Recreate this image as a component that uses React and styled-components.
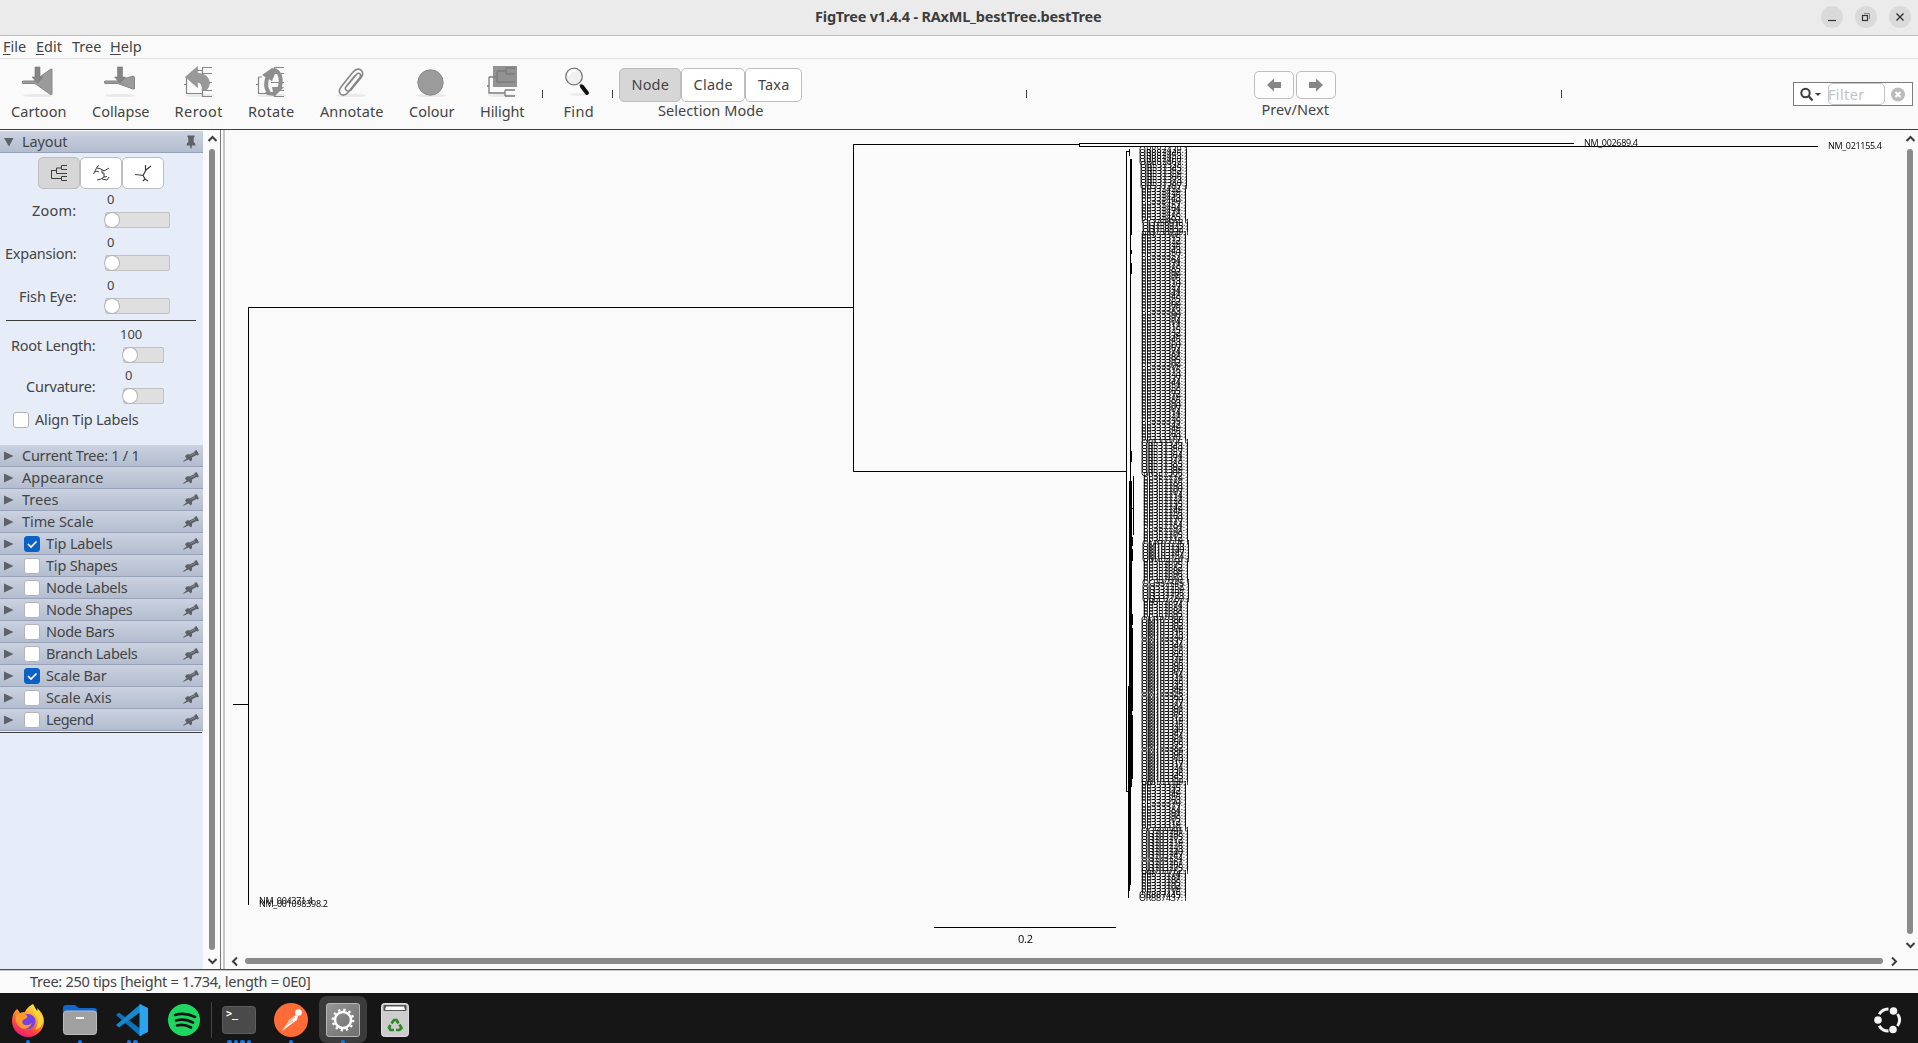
import React, { useLayoutEffect, useRef, useState } from "react";
import styled, { createGlobalStyle, css } from "styled-components";

const Global = createGlobalStyle`
  *, *::before, *::after { box-sizing: border-box; }
  html, body { margin: 0; padding: 0; overflow: hidden; background: #fafafa; }
  body { font-family: "Noto Sans", "Open Sans", sans-serif; font-size: 14.5px; line-height: 20px; color: #444; }
  svg { display: block; flex: none; }
`;

/* ---------- text that is tracked to an exact run length ---------- */
const Run = styled.span`
  display: block;
  flex: none;
  width: ${(p) => p.$w}px;
  white-space: nowrap;
`;
function Fit({ w, children, className }) {
  const ref = useRef(null);
  const [ls, setLs] = useState(0);
  useLayoutEffect(() => {
    const natural = ref.current.getBoundingClientRect().width;
    setLs((w + 0.5 - natural) / children.length);
  }, [w, children]);
  return (
    <Run $w={w} className={className} style={{ letterSpacing: ls }}>
      <span ref={ref}>{children}</span>
    </Run>
  );
}

const Window = styled.div`
  width: 1918px;
  height: 1043px;
  display: flex;
  flex-direction: column;
  overflow: hidden;
`;

/* ---------- title bar ---------- */
const TitleBar = styled.header`
  height: 36px;
  flex: none;
  background: #ebebeb;
  border-bottom: 1px solid #bcbcbc;
  display: flex;
  align-items: center;
  padding: 0 7px 1px 815px;
`;
const Title = styled(Fit)`
  font-weight: 700;
  font-size: 14.5px;
  color: #3d3d3d;
  margin-top: -2px;
`;
const WindowButtons = styled.div`
  display: flex;
  gap: 12px;
  margin-left: auto;
`;
const RoundButton = styled.div`
  width: 22px;
  height: 22px;
  border-radius: 50%;
  background: #dadada;
`;

/* ---------- menu ---------- */
const MenuBar = styled.nav`
  height: 23px;
  flex: none;
  border-bottom: 1px solid #e0e0e0;
  display: flex;
  align-items: center;
  gap: 9px;
  padding: 0 0 2px 3px;
  u { text-underline-offset: 2px; text-decoration-thickness: 1px; }
`;

/* ---------- toolbar ---------- */
const ToolBar = styled.div`
  height: 71px;
  flex: none;
  display: flex;
  border-bottom: 1px solid #3d3d3d;
`;
const Tool = styled.div`
  width: ${(p) => p.$w}px;
  flex: none;
  margin-left: ${(p) => p.$ml || 0}px;
  padding-top: 7px;
  display: flex;
  flex-direction: column;
  align-items: center;
`;
const ToolLabel = styled(Fit)`
  margin-top: 3px;
  line-height: 20px;
`;
const Tick = styled.div`
  flex: none;
  width: 1px;
  height: 8px;
  margin-top: 31px;
  margin-left: ${(p) => p.$ml}px;
  background: #3d3d3d;
`;
const Segments = styled.div`
  display: flex;
`;
const Segment = styled.div`
  width: ${(p) => p.$w}px;
  height: ${(p) => p.$h}px;
  display: flex;
  align-items: center;
  justify-content: center;
  border: 1px solid #bdbdbd;
  border-radius: 5px;
  background: ${(p) => (p.$on ? "#d6d6d6" : "#fff")};
  ${Run} { margin-top: -2px; }
`;
const ModeGroup = styled(Tool)`
  padding-top: 9px;
  ${ToolLabel} { margin-top: -2px; }
`;
const NavGroup = styled(Tool)`
  padding-top: 12px;
  ${Segments} { gap: 2px; }
  ${Segment} { background: #fdfdfd; }
`;
const FilterBox = styled.div`
  width: 120px;
  height: 24px;
  margin: 23px 0 0 231px;
  border: 1px solid #7d7d7d;
  background: #fff;
  display: flex;
  align-items: center;
`;
const FilterInput = styled.div`
  width: 57px;
  height: 22px;
  margin-left: 6px;
  border: 1px solid #c2c2c2;
  border-radius: 5px;
  color: #c3c3c3;
  display: flex;
  align-items: center;
  ${Run} { margin: -1px 0 0 -1px; }
`;

/* ---------- body ---------- */
const Body = styled.main`
  height: 840px;
  flex: none;
  display: flex;
  border-bottom: 1px solid #4a4a4a;
`;
const Sidebar = styled.aside`
  width: 203px;
  flex: none;
  margin-top: 1px;
  background: #e6edf8;
`;
const Section = styled.div`
  height: 22px;
  display: flex;
  align-items: center;
  padding: 0 4px 0 4px;
  background: linear-gradient(#cbd2e0, #b3bdcf);
  border-bottom: 1px solid #98a3ba;
`;
const SectionName = styled(Fit)`
  margin-top: -2px;
`;
const Disclosure = styled.div`
  width: 18px;
  flex: none;
`;
const PinSlot = styled.div`
  margin-left: auto;
`;
const Check = styled.div`
  width: 16px;
  height: 16px;
  flex: none;
  margin: 0 6px 0 ${(p) => p.$ml}px;
  border-radius: 3px;
  border: 1px solid ${(p) => (p.$on ? "#0b62c4" : "#b4b4b4")};
  background: ${(p) => (p.$on ? "#0b62c4" : "#fff")};
`;
const LayoutPane = styled.div`
  height: 292px;
  padding-top: 4px;
`;
const LayoutModes = styled(Segments)`
  padding-left: 38px;
  margin-bottom: 1px;
`;
const Control = styled.div`
  height: ${(p) => p.$h}px;
  display: flex;
`;
const ControlName = styled.div`
  width: ${(p) => p.$w}px;
  padding-top: ${(p) => 11 - p.$lift}px;
  display: flex;
  justify-content: flex-end;
`;
const Slider = styled.div`
  margin-left: ${(p) => p.$ml}px;
`;
const Value = styled.div`
  height: 23px;
  margin-top: ${(p) => -p.$lift}px;
  margin-left: ${(p) => p.$x}px;
  font-size: 13px;
`;
const Track = styled.div`
  width: ${(p) => p.$w}px;
  height: 16px;
  border: 1px solid #c2c2c2;
  border-radius: 2px;
  background: #dfdfdf;
`;
const Knob = styled.div`
  width: 14px;
  height: 14px;
  margin-left: -1px;
  border-radius: 50%;
  background: #fff;
  box-shadow: 0 0 0 1px #b5b5b5;
`;
const Rule = styled.div`
  height: 1px;
  margin: 0 7px 3px 6px;
  background: #3d3d3d;
`;
const AlignRow = styled.div`
  display: flex;
  align-items: center;
  margin-top: 1px;
  ${Run} { margin-top: -1px; }
`;
const EndRule = styled.div`
  height: 1px;
  width: 202px;
  margin-top: 1px;
  background: #3d3d3d;
`;
const VBar = styled.div`
  width: 17px;
  flex: none;
  display: flex;
  flex-direction: column;
  align-items: center;
  padding: 3px ${(p) => p.$pr || 0}px 0 ${(p) => p.$pl || 0}px;
`;
const VThumb = styled.div`
  width: 6px;
  height: ${(p) => p.$h}px;
  margin: 4px 0 5px;
  border-radius: 3px;
  background: #8a8a8a;
`;
const Divider = styled.div`
  width: 5px;
  flex: none;
  border-left: 1px solid #777;
  border-right: 2px solid #c6c6c6;
`;
const Viewer = styled.section`
  width: 1678px;
  flex: none;
`;
const HBar = styled.div`
  height: 14px;
  display: flex;
  align-items: center;
  padding-left: 4px;
`;
const HThumb = styled.div`
  width: 1638px;
  height: 6px;
  margin: 0 5px 0 3px;
  border-radius: 3px;
  background: #8a8a8a;
`;
const Status = styled.div`
  height: 23px;
  flex: none;
  border-top: 1px solid #c8c8c8;
  padding: 0 0 2px 30px;
  display: flex;
  align-items: center;
`;

/* ---------- dock ---------- */
const Dock = styled.footer`
  height: 50px;
  flex: none;
  background: #161616;
  display: flex;
  padding: 3px 16px 0 4px;
`;
const DockCell = styled.div`
  position: relative;
  width: 48px;
  height: 47px;
  flex: none;
  margin-right: ${(p) => p.$mr}px;
  display: flex;
  justify-content: center;
  padding-top: 7px;
  ${(p) => p.$active && css`background: #3b3b3b; border-radius: 8px;`}
`;
const Dots = styled.div`
  position: absolute;
  left: 0;
  right: 0;
  bottom: -1px;
  display: flex;
  justify-content: center;
  gap: 2px;
  i { width: 4.5px; height: 4.5px; border-radius: 50%; background: #1a78e6; }
`;
const DockSplit = styled.div`
  width: 1px;
  height: 36px;
  margin: 6px 3px 0 0;
  background: #454545;
`;
const Launcher = styled.div`
  margin: 10px 0 0 auto;
`;

/* ---------- toolbar drawings ---------- */
const Shadow = () => <ellipse cx="16" cy="29.5" rx="15" ry="1.6" fill="#e9e9e9" />;
const Branches = () => (
  <path d="M0 18.500H2M2.500 11V27.500H18M2.500 11H6M18.500 24V31M18.500 24.500H28M18.500 30.500H28M15 16.500H28M18.500 1V8M18.500 1.500H28M18.500 7.500H28M13 4.500H18" fill="none" stroke="#858585" strokeWidth="1.2" />
);
const icons = {
  cartoon: (
    <svg width="33" height="32"><Shadow />
      <path d="M1 15H12L29 3Q30 2.500 30 4V27.500Q30 29 28.500 28.500L13 17.500H2Q0 17.500 0 16Z" fill="#9b9b9b" stroke="#858585" />
      <path d="M13 1H18V11H21L15.500 17L10 11H13Z" fill="#858585" stroke="#777" strokeWidth=".6" />
    </svg>
  ),
  collapse: (
    <svg width="33" height="32"><Shadow />
      <path d="M1 15H13L29 10L30.500 11V22Q30.500 23.500 29 23L14 17.500H2Q0 17.500 0 16Z" fill="#9b9b9b" stroke="#858585" />
      <path d="M13.500 1H18.500V11H21.500L16 17L10.500 11H13.500Z" fill="#858585" stroke="#777" strokeWidth=".6" />
    </svg>
  ),
  reroot: (
    <svg width="30" height="32"><Shadow /><Branches />
      <path d="M1.500 11L13.500 .5V7Q25 8 25.500 17Q25 22 22 24.500H18Q19 17 13.500 16V21.500Z" fill="#999" stroke="#8a8a8a" strokeWidth=".6" />
    </svg>
  ),
  rotate: (
    <svg width="30" height="32"><Shadow /><Branches />
      <path d="M17 5C10 8 8 21 13 26.500M19 4C26 7 26 19 22 24" fill="none" stroke="#8f8f8f" strokeWidth="4" />
      <path d="M6 9L16 2L21 3L16 15ZM16 21L28 21L19 30L11 29L9 26H17Z" fill="#8e8e8e" />
    </svg>
  ),
  annotate: (
    <svg width="34" height="32"><Shadow />
      <path d="M11 21L21 9Q23 6 25 8Q26.500 9.500 24.500 12L13 26.500Q9 31 5.500 28Q3 25 6 21L18 6Q22 1.500 26 4Q29 7 26.500 11L16 24Q13 26 11 24Q9.500 22 11.500 20L20 9.500" fill="none" stroke="#888" strokeWidth="1.600" />
    </svg>
  ),
  colour: (
    <svg width="33" height="32"><Shadow />
      <circle cx="15.500" cy="16.500" r="12.700" fill="#9b9b9b" stroke="#898989" />
    </svg>
  ),
  hilight: (
    <svg width="30" height="32"><Shadow />
      <rect x="6" y="0" width="24" height="21" fill="#929292" />
      <path d="M0 20H2M2 11V27H18M2 11H10M10 5V16M10 5H19M19 2V8M19 2H28M19 8H28M10 16H28M18 24V30M18 24H28M18 30H28" fill="none" stroke="#7c7c7c" strokeWidth="1.3" />
    </svg>
  ),
  find: (
    <svg width="27" height="32"><ellipse cx="14" cy="28.500" rx="9" ry="1.300" fill="#e9e9e9" />
      <path d="M15 18.500L17 20.500" stroke="#777" strokeWidth="2.500" />
      <path d="M17 20.500L22 27" stroke="#111" strokeWidth="4" strokeLinecap="round" />
      <circle cx="9" cy="10.500" r="8.3" fill="#f0f0f0" stroke="#777" strokeWidth="1.3" />
      <path d="M3.500 10Q5 4 11 5" fill="none" stroke="#fff" strokeWidth="2" />
    </svg>
  ),
};

const tools = [
  ["Cartoon", 77, 55, "cartoon"],
  ["Collapse", 87, 57, "collapse"],
  ["Reroot", 69, 48, "reroot"],
  ["Rotate", 76, 46, "rotate"],
  ["Annotate", 85, 63, "annotate"],
  ["Colour", 75, 45, "colour"],
  ["Hilight", 66, 44, "hilight"],
];

const chevrons = {
  up: "M2.500 8L6.500 4L10.500 8",
  down: "M2.500 4L6.500 8L10.500 4",
  left: "M8 2.500L4 6.500L8 10.500",
  right: "M4 2.500L8 6.500L4 10.500",
};
const Chevron = ({ dir }) => (
  <svg width="13" height="12"><path d={chevrons[dir]} fill="none" stroke="#3d3d3d" strokeWidth="2" /></svg>
);

const Pin = ({ up }) => (
  <svg width="16" height="14" viewBox="0 0 16 14">
    {up ? (
      <path d="M4.500 .5H11.500V2L10.700 3V7Q12.500 8 12.500 10.500H9L8.500 13.500H7.500L7 10.500H3.500Q3.500 8 5.300 7V3L4.500 2Z" fill="#5e6268" />
    ) : (
      <g>
        <path d="M0 12.300L3.500 9.500L2 7.500Q3 5 5.500 5.300L6.500 5.500L11.500 3L11.500 2L13.500 1L16 5.500L14.500 6.500L13.500 6L9 8.500Q9.500 11 8 12.500L5.500 10.500L.5 12.800Z" fill="#5e6268" />
        <path d="M7.500 6.500L12 4.300" stroke="#8d949f" strokeWidth=".8" />
      </g>
    )}
  </svg>
);

const sections = [
  ["Current Tree: 1 / 1", 117],
  ["Appearance", 81],
  ["Trees", 36],
  ["Time Scale", 71],
  ["Tip Labels", 66, true],
  ["Tip Shapes", 71, false],
  ["Node Labels", 81, false],
  ["Node Shapes", 86, false],
  ["Node Bars", 68, false],
  ["Branch Labels", 91, false],
  ["Scale Bar", 60, true],
  ["Scale Axis", 65, false],
  ["Legend", 47, false],
];

function CheckBox({ on, ml = 2 }) {
  return (
    <Check $on={on} $ml={ml}>
      {on && <svg width="14" height="14"><path d="M3 7L6 10L11.500 4.500" fill="none" stroke="#fff" strokeWidth="1.700" /></svg>}
    </Check>
  );
}

function SliderRow({ name, nameW, labelCol, h, value, valueX, gap, trackW, lift = 0 }) {
  return (
    <Control $h={h}>
      <ControlName $w={labelCol} $lift={lift}><Fit w={nameW}>{name}</Fit></ControlName>
      <Slider $ml={gap}>
        <Value $x={valueX} $lift={lift}>{value}</Value>
        <Track $w={trackW}><Knob /></Track>
      </Slider>
    </Control>
  );
}

/* ---------- phylogeny ---------- */
const clades = [
  { to: 5, x: 1139, w: 50, p: "OR8874", base: 39 },
  { to: 13, x: 1140, w: 49, p: "OR5373", base: 3 },
  { to: 24, x: 1141, w: 47, p: "PP3324", base: 31 },
  { to: 28, x: 1142, w: 48, p: "OQ7589", base: 50 },
  { to: 96, x: 1141, w: 47, p: "PP3333", base: 12 },
  { to: 107, x: 1141, w: 49, p: "OR5373", base: 64 },
  { to: 129, x: 1143, w: 47, p: "PP3577", base: 23 },
  { to: 135, x: 1142, w: 49, p: "OM1037", base: 23 },
  { to: 142, x: 1143, w: 47, p: "PP3576", base: 23 },
  { to: 148, x: 1142, w: 49, p: "OQ3377", base: 51 },
  { to: 154, x: 1143, w: 47, p: "PP3576", base: 31 },
  { to: 208, x: 1141, w: 49, p: "OM1033", base: 10 },
  { to: 223, x: 1141, w: 47, p: "PP3333", base: 72 },
  { to: 237, x: 1141, w: 49, p: "OQ7037", base: 30 },
  { to: 244, x: 1141, w: 47, p: "PP3337", base: 15 },
  { to: 246, x: 1139, w: 49, p: "OR8874", base: 37 },
];
const tips = [];
for (let i = 0; i < 246; i++) {
  const c = clades.find((k) => i < k.to);
  const n = i === 245 ? 37 : (c.base + i * 7) % 100;
  tips.push({ y: Math.round(152.5 + i * 3.056), x: c.x, w: c.w, text: `${c.p}${String(n).padStart(2, "0")}.1` });
}

const TreeSvg = styled.svg`
  will-change: transform;
`;
const TipText = styled.text`
  font-family: "Open Sans", "Noto Sans", sans-serif;
  font-size: 9px;
  fill: #000;
`;
const ScaleText = styled(TipText)`
  font-size: 11px;
`;

function Tree() {
  return (
    <TreeSvg width="1678" height="824" viewBox="225 130 1678 824">
      <g fill="none" stroke="#000" strokeWidth="1" shapeRendering="crispEdges">
        <path d="M233 704.500H248M248.500 904.500V307.500H853.500M853.500 471.500V144.500H1079M853 471.500H1126M1574 143.500H1079.500V146.500H1818" />
        <path d="M1129 151.500H1126.500V791.500H1129M1129.500 149V156M1133.500 476V535M1132 508.500H1134M1128.500 686V898" />
        <path d="M934 927.500H1116" />
      </g>
      <g fill="#000" shapeRendering="crispEdges">
        <path d="M1130 159H1132V235H1131V250H1132V254H1131V263H1132V274H1131V451H1132V462H1131V481H1130Z" />
        <path d="M1129 481H1132V537H1133V546H1132V549H1133V561H1132V614H1133V625H1132V628H1133V711H1132V715H1133V779H1132V787H1131V885H1130V891H1129V898H1128V686H1129Z" />
      </g>
      <TipText x="1584" y="146" textLength="54">NM_002689.4</TipText>
      <TipText x="1828" y="149" textLength="54">NM_021155.4</TipText>
      {tips.map((t, i) => (
        <TipText key={i} x={t.x} y={t.y} textLength={t.w}>{t.text}</TipText>
      ))}
      <TipText x="259" y="904" textLength="54">NM_004371.4</TipText>
      <TipText x="259" y="907" textLength="69">NM_001098398.2</TipText>
      <ScaleText x="1018" y="943" textLength="15">0.2</ScaleText>
    </TreeSvg>
  );
}

/* ---------- dock icons ---------- */
const Firefox = () => (
  <svg width="34" height="34" viewBox="0 0 34 34">
    <defs>
      <linearGradient id="ff" x1=".8" y1="0" x2=".3" y2="1">
        <stop offset="0" stopColor="#fff44f" /><stop offset=".35" stopColor="#ffa62a" /><stop offset=".7" stopColor="#ff4a3d" /><stop offset="1" stopColor="#e8177d" />
      </linearGradient>
    </defs>
    <path d="M6 6Q8 8 9 10Q11 9 14 9Q16 4 22 1Q22 5 26 8Q27 7 26 5Q33 11 33 18A16 16 0 0 1 1 18Q1 10 6 6Z" fill="url(#ff)" />
    <circle cx="17" cy="18.500" r="7.500" fill="#7542e5" />
    <path d="M5 12Q10 9 15 12Q18 14 14 16Q10 17 12 21Q16 24 21 20Q17 28 10 25Q3 20 5 12Z" fill="#ff9a2c" />
    <path d="M22 1Q20 8 25 13Q29 20 24 27Q33 24 32 16Q31 11 26 8Z" fill="#ffd43a" />
  </svg>
);
const Folder = () => (
  <svg width="34" height="34" viewBox="0 0 34 34">
    <path d="M0 5Q0 2 3 2H12L16 5H31Q34 5 34 8V16H0Z" fill="#0f67cf" />
    <rect x=".5" y="8" width="33" height="23.500" rx="3" fill="#a0a0a0" stroke="#bdbdbd" />
    <rect x="13" y="14" width="8" height="2" fill="#f4f4f4" />
  </svg>
);
const Code = () => (
  <svg width="34" height="34" viewBox="0 0 34 34">
    <path d="M1 12L4 9.500L27 27V33L25 33Z" fill="#0a72b8" />
    <path d="M1 22L4 24.500L27 8V1.500L25 1.500Z" fill="#1588d0" />
    <path d="M24.500 1L33 5V29L24.500 33Z" fill="#2aa4ef" />
  </svg>
);
const Spotify = () => (
  <svg width="34" height="34" viewBox="0 0 34 34">
    <circle cx="17" cy="17" r="16" fill="#1ed760" />
    <path d="M8 12Q18 9 28 14M9 17.500Q18 15 26 19.500M10 22.500Q17 20.500 24 24.500" fill="none" stroke="#141414" strokeWidth="2.600" strokeLinecap="round" />
  </svg>
);
const TermText = styled.text`
  font: 700 10px "DejaVu Sans Mono", monospace;
  fill: #fff;
`;
const Terminal = () => (
  <svg width="34" height="34" viewBox="0 0 34 34">
    <rect x=".5" y="3.500" width="33" height="27" rx="3" fill="#4a4a4a" stroke="#5e5e5e" />
    <TermText x="4" y="14">&gt;_</TermText>
  </svg>
);
const Postman = () => (
  <svg width="34" height="34" viewBox="0 0 34 34">
    <circle cx="17" cy="17" r="17" fill="#ff6c37" />
    <circle cx="24.500" cy="9.500" r="3.300" fill="#fff" />
    <path d="M22 12L15 17L12 22L8 28L16 22L23 17L24 13Z" fill="#fff" />
    <path d="M13 20L21 14M12 22L19 18" stroke="#ff6c37" strokeWidth=".7" />
  </svg>
);
const Settings = () => (
  <svg width="34" height="34" viewBox="0 0 34 34">
    <defs><linearGradient id="st" x2="1" y2="1"><stop stopColor="#969696" /><stop offset="1" stopColor="#6e6e6e" /></linearGradient></defs>
    <rect x=".5" y=".5" width="33" height="33" rx="2.500" fill="url(#st)" stroke="#b5b5b5" />
    <circle cx="17" cy="17" r="8" fill="none" stroke="#fff" strokeWidth="2.500" />
    <circle cx="17" cy="17" r="10.200" fill="none" stroke="#fff" strokeWidth="2.400" strokeDasharray="2.340 3" />
  </svg>
);
const Trash = () => (
  <svg width="28" height="34" viewBox="0 0 28 34">
    <rect x=".5" y=".5" width="27" height="33" rx="3" fill="#cdcdcd" stroke="#dedede" />
    <rect x="2.500" y="2" width="23" height="6" rx="1" fill="#555" />
    <path d="M4 7L5 3.500H23L24 7Z" fill="#fff" />
    <g fill="none" stroke="#2c8a25" strokeWidth="2.700">
      <path d="M10.500 20.500L13 17H15.500L17.500 20.500" /><path d="M18.500 21.500L20.500 25L18.500 27H15" /><path d="M13 27H9.500L8 24.500L9.500 22" />
    </g>
  </svg>
);
const Circle = () => (
  <svg width="28" height="28" viewBox="0 0 28 28">
    <g fill="none" stroke="#f4f4f4" strokeWidth="3">
      <path d="M5.200 8.300A10.500 10.500 0 0 1 14.500 3" /><path d="M23.500 8A10.500 10.500 0 0 1 23.500 20" /><path d="M5.200 19.700A10.500 10.500 0 0 0 14.500 25" />
    </g>
    <g fill="#f4f4f4"><circle cx="4" cy="14" r="3.800" /><circle cx="19.500" cy="5" r="3.800" /><circle cx="19" cy="23.500" r="3.800" /></g>
  </svg>
);
const DockItem = ({ icon, dots = 0, mr, active }) => (
  <DockCell $mr={mr} $active={active}>
    {icon}
    <Dots>{Array.from({ length: dots }, (_, i) => <i key={i} />)}</Dots>
  </DockCell>
);

export default function App() {
  return (
    <Window>
      <Global />
      <TitleBar>
        <Title w={286}>FigTree v1.4.4 - RAxML_bestTree.bestTree</Title>
        <WindowButtons>
          <RoundButton><svg width="22" height="22"><path d="M7 14.500H15" stroke="#333" strokeWidth="1.200" /></svg></RoundButton>
          <RoundButton><svg width="22" height="22" fill="none"><path d="M9 7.500H14.500V13" stroke="#888" /><rect x="7.500" y="9.500" width="5" height="5" stroke="#333" strokeWidth="1.200" /></svg></RoundButton>
          <RoundButton><svg width="22" height="22"><path d="M7.500 7.500L14.500 14.500M14.500 7.500L7.500 14.500" stroke="#333" strokeWidth="1.400" /></svg></RoundButton>
        </WindowButtons>
      </TitleBar>
      <MenuBar>
        <Run $w={24}><u>F</u>ile</Run>
        <Run $w={27}><u>E</u>dit</Run>
        <Run $w={29}>Tree</Run>
        <Run $w={30}><u>H</u>elp</Run>
      </MenuBar>
      <ToolBar>
        {tools.map(([name, w, tw, icon]) => (
          <Tool key={name} $w={w}>{icons[icon]}<ToolLabel w={tw}>{name}</ToolLabel></Tool>
        ))}
        <Tick $ml={7} />
        <Tool $w={51} $ml={10}>{icons.find}<ToolLabel w={30}>Find</ToolLabel></Tool>
        <Tick $ml={8} />
        <ModeGroup $w={183} $ml={6}>
          <Segments>
            <Segment $w={62} $h={34} $on><Fit w={37}>Node</Fit></Segment>
            <Segment $w={64} $h={34}><Fit w={39}>Clade</Fit></Segment>
            <Segment $w={57} $h={34}><Fit w={31}>Taxa</Fit></Segment>
          </Segments>
          <ToolLabel w={105}>Selection Mode</ToolLabel>
        </ModeGroup>
        <Tick $ml={224} />
        <NavGroup $w={82} $ml={227}>
          <Segments>
            <Segment $w={40} $h={28}><svg width="16" height="14"><path d="M1 7L8 .5V4H15V10H8V13.500Z" fill="#858585" /></svg></Segment>
            <Segment $w={40} $h={28}><svg width="16" height="14"><path d="M15 7L8 .5V4H1V10H8V13.500Z" fill="#858585" /></svg></Segment>
          </Segments>
          <Fit w={67}>Prev/Next</Fit>
        </NavGroup>
        <Tick $ml={225} />
        <FilterBox>
          <svg width="28" height="20"><circle cx="11.500" cy="9" r="4.200" fill="none" stroke="#3d3d3d" strokeWidth="2" /><path d="M14.500 12L18.500 16.500" stroke="#3d3d3d" strokeWidth="2.200" /><path d="M21 9H27L24 12Z" fill="#3d3d3d" /></svg>
          <FilterInput><Fit w={36}>Filter</Fit></FilterInput>
          <svg width="26" height="20"><circle cx="13" cy="10.500" r="7" fill="#bcbcbc" /><path d="M10.500 8L15.500 13M15.500 8L10.500 13" stroke="#fff" strokeWidth="2" /></svg>
        </FilterBox>
      </ToolBar>
      <Body>
        <Sidebar>
          <Section>
            <Disclosure><svg width="10" height="10"><path d="M0 1H9.500L5 9.500Z" fill="#5e6268" /></svg></Disclosure>
            <SectionName w={45}>Layout</SectionName>
            <PinSlot><Pin up /></PinSlot>
          </Section>
          <LayoutPane>
            <LayoutModes>
              <Segment $w={42} $h={32} $on><svg width="18" height="18" fill="none" stroke="#3d3d3d"><path d="M1.500 6V14.500H11M1.500 6.500H6.500M6.500 4V9.500H17M6.500 4H11M11.500 1.500H17M11.500 1.500V5.500H17M11.500 12.500H17M11.500 12.500V16.500H17" /></svg></Segment>
              <Segment $w={42} $h={32}><svg width="18" height="18" fill="none" stroke="#3d3d3d"><path d="M1.500 10L5 3L7 1.500M5 4L9 5L12 7L17 4M3 8L5 7L7 8M10 6V9H12V13L9 15L5 16M10 15L15 16L17 13M12 13L15 12.500" /></svg></Segment>
              <Segment $w={42} $h={32}><svg width="18" height="18" fill="none" stroke="#3d3d3d" strokeWidth="1.200"><path d="M1 10.500L6 11L9 11.500L12 6L17 2M11.500 7V1M9 11.500L11 15L9 17M11 15L14 17" /></svg></Segment>
            </LayoutModes>
            <SliderRow name="Zoom:" nameW={44} labelCol={76} h={43} value="0" valueX={2} gap={29} trackW={65} lift={1} />
            <SliderRow name="Expansion:" nameW={71} labelCol={76} h={43} value="0" valueX={2} gap={29} trackW={65} lift={1} />
            <SliderRow name="Fish Eye:" nameW={57} labelCol={76} h={44} value="0" valueX={2} gap={29} trackW={65} lift={1} />
            <Rule />
            <SliderRow name="Root Length:" nameW={84} labelCol={95} h={41} value="100" valueX={-3} gap={28} trackW={41} />
            <SliderRow name="Curvature:" nameW={69} labelCol={95} h={44} value="0" valueX={2} gap={28} trackW={41} />
            <AlignRow><CheckBox ml={13} /><Fit w={103}>Align Tip Labels</Fit></AlignRow>
          </LayoutPane>
          {sections.map(([name, w, checked]) => (
            <Section key={name}>
              <Disclosure><svg width="10" height="10"><path d="M0 .5L9.500 5L0 9.500Z" fill="#5e6268" /></svg></Disclosure>
              {checked !== undefined && <CheckBox on={checked} />}
              <SectionName w={w}>{name}</SectionName>
              <PinSlot><Pin /></PinSlot>
            </Section>
          ))}
          <EndRule />
        </Sidebar>
        <VBar $pl={1}><Chevron dir="up" /><VThumb $h={801} /><Chevron dir="down" /></VBar>
        <Divider />
        <Viewer>
          <Tree />
          <HBar><Chevron dir="left" /><HThumb /><Chevron dir="right" /></HBar>
        </Viewer>
        <VBar $pr={3}><Chevron dir="up" /><VThumb $h={785} /><Chevron dir="down" /></VBar>
      </Body>
      <Status><Fit w={280}>Tree: 250 tips [height = 1.734, length = 0E0]</Fit></Status>
      <Dock>
        <DockItem icon={<Firefox />} dots={1} mr={4} />
        <DockItem icon={<Folder />} dots={1} mr={4} />
        <DockItem icon={<Code />} dots={2} mr={4} />
        <DockItem icon={<Spotify />} mr={3} />
        <DockSplit />
        <DockItem icon={<Terminal />} dots={4} mr={4} />
        <DockItem icon={<Postman />} dots={1} mr={4} />
        <DockItem icon={<Settings />} dots={1} mr={4} active />
        <DockItem icon={<Trash />} mr={0} />
        <Launcher><Circle /></Launcher>
      </Dock>
    </Window>
  );
}
